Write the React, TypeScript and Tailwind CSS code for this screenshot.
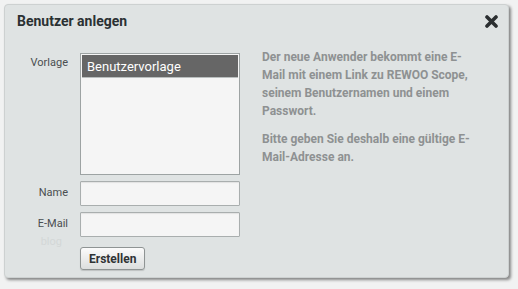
import React from "react";

const font = { fontFamily: "Roboto, 'Liberation Sans', sans-serif" };

function CloseIcon() {
  return (
    <svg width="13" height="13" viewBox="0 0 13 13" className="block">
      <path d="M2 2 L11 11 M11 2 L2 11" stroke="#2b2f31" strokeWidth="3.6" strokeLinecap="round" />
    </svg>
  );
}

function Field() {
  return (
    <div className="w-[160px] h-[25px] bg-[#f5f5f5] border border-[#a9aeae] rounded-[1px] shadow-[inset_0_1px_1px_rgba(0,0,0,0.08)]" />
  );
}

export default function App() {
  return (
    <div className="w-[518px] h-[289px] bg-[#f1f2f2] pt-[4px] pl-[4px]" style={font}>
      <div className="w-[505px] h-[274px] bg-[#dfe3e3] border border-[#cdd1d1] rounded-[4px] shadow-[2px_2px_3px_rgba(0,0,0,0.45)]">
        <div className="flex items-center justify-between h-[33px] pl-[12px] pr-[10px]">
          <h1 className="text-[14px] font-bold text-[#2b3133]">Benutzer anlegen</h1>
          <CloseIcon />
        </div>
        <div className="flex pt-[15px]">
          <div className="flex flex-col">
            <div className="flex gap-[12px]">
              <div className="w-[63px] text-right text-[11px] leading-[16px] pt-[2px] text-[#4a4e50]">Vorlage</div>
              <div className="w-[160px] h-[122px] bg-[#f5f5f5] border border-[#9da3a3] p-px">
                <div className="h-[23px] bg-[#666666] text-white text-[13px] leading-[23px] pl-[5px] border-b border-[#b9bebe]">
                  Benutzervorlage
                </div>
              </div>
            </div>
            <div className="flex gap-[12px] items-center mt-[6px]">
              <div className="w-[63px] text-right text-[11px] text-[#4a4e50]">Name</div>
              <Field />
            </div>
            <div className="flex gap-[12px] items-center mt-[6px]">
              <div className="w-[63px] text-right text-[11px] text-[#4a4e50]">E-Mail</div>
              <Field />
            </div>
            <div className="flex gap-[12px] h-[10px]">
              <div className="w-[57px] text-right text-[11px] leading-[10px] text-[#d3d7d7]">blog</div>
            </div>
            <div className="flex gap-[12px]">
              <div className="w-[63px]" />
              <button className="h-[23px] px-[8px] text-[12px] font-bold text-[#2f3335] rounded-[3px] border border-[#8f9494] bg-gradient-to-b from-[#fbfbfb] to-[#dcdede] shadow-[0_1px_1px_rgba(0,0,0,0.15)]">
                Erstellen
              </button>
            </div>
          </div>
          <div className="ml-[22px] -mt-[5px] w-[218px] text-[12px] leading-[18px] font-bold text-[#8e9192]">
            <p>Der neue Anwender bekommt eine E-Mail mit einem Link zu REWOO Scope, seinem Benutzernamen und einem Passwort.</p>
            <p className="mt-[10px]">Bitte geben Sie deshalb eine gültige E-Mail-Adresse an.</p>
          </div>
        </div>
      </div>
    </div>
  );
}
